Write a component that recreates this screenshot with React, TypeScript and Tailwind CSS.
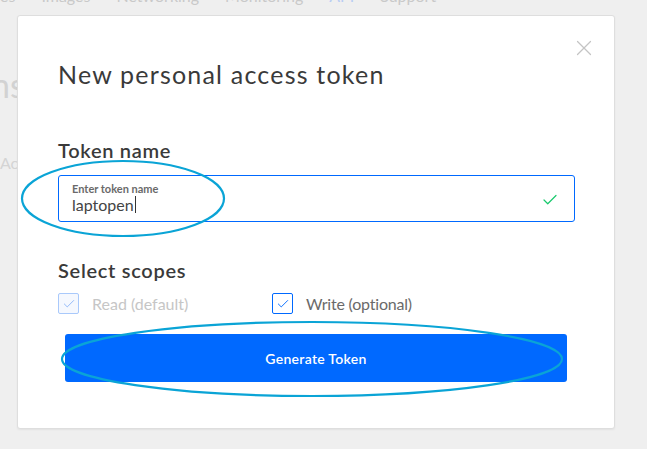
import { Check, X } from "lucide-react";

const font = { fontFamily: "Lato, 'Liberation Sans', sans-serif" };

function Scope({ label, checked, disabled }: { label: string; checked: boolean; disabled?: boolean }) {
    return (
        <div className="flex items-center gap-[13px] w-[214px] h-[21px]">
            <div
                className={
                    disabled
                        ? "w-[21px] h-[21px] rounded-[2px] border border-[#a9c9fb] bg-[#f5f8fe] flex items-center justify-center"
                        : "w-[21px] h-[21px] rounded-[2px] border border-[#0069ff] bg-white flex items-center justify-center"
                }
            >
                {checked && (
                    <Check
                        size={14}
                        strokeWidth={1.6}
                        className={disabled ? "text-[#8db6f7]" : "text-[#0069ff]"}
                    />
                )}
            </div>
            <div
                className={
                    disabled
                        ? "text-[16px] leading-[21px] text-[#c6c6c6]"
                        : "text-[16px] leading-[21px] tracking-[-0.2px] text-[#6a6a6a]"
                }
            >
                {label}
            </div>
        </div>
    );
}

export default function App() {
    return (
        <div className="relative w-[647px] h-[449px] overflow-hidden bg-[#efefef]" style={font}>
            {/* page behind the modal */}
            <div className="flex gap-[26px] -mt-[14px] h-[20px] leading-[20px] text-[16px] text-[#c9c9c9] whitespace-nowrap">
                <div>es</div>
                <div>Images</div>
                <div>Networking</div>
                <div>Monitoring</div>
                <div className="text-[#b9cdf3]">API</div>
                <div>Support</div>
            </div>
            <div className="mt-[58px] -ml-[9px] text-[34px] leading-[42px] text-[#d2d2d2] whitespace-nowrap">ns</div>
            <div className="mt-[47px] text-[16px] leading-[20px] text-[#d4d4d4]">Ac</div>

            {/* modal */}
            <div className="absolute left-[17px] top-[15px] w-[598px] h-[414px] bg-white border border-[#dedede] rounded-[3px] shadow-[0_1px_2px_rgba(0,0,0,0.06)] pl-[40px] pr-[39px] pt-[43px]">
                <button className="absolute right-[17px] top-[19px] text-[#c4c4c4]">
                    <X size={26} strokeWidth={1.1} />
                </button>

                <div className="text-[25px] leading-[30px] tracking-[1.2px] text-[#3a3a3a] whitespace-nowrap">
                    New personal access token
                </div>

                <div className="mt-[49px] text-[20px] leading-[24px] tracking-[0.7px] font-semibold text-[#3a3a3a]">
                    Token name
                </div>

                <div className="mt-[13px] h-[47px] border border-[#0069ff] rounded-[3px] pl-[13px] pr-[15px] pt-[6px] flex items-start justify-between">
                    <div className="flex flex-col">
                        <div className="text-[11px] leading-[13px] font-bold text-[#6a6a6a]">Enter token name</div>
                        <div className="flex items-center text-[16px] leading-[19px] text-[#444]">
                            laptopen
                            <span className="inline-block w-px h-[17px] bg-[#333] ml-px" />
                        </div>
                    </div>
                    <Check size={18} strokeWidth={1.6} className="text-[#18c96d] mt-[9px]" />
                </div>

                <div className="mt-[36px] text-[20px] leading-[24px] tracking-[0.7px] font-semibold text-[#3a3a3a]">
                    Select scopes
                </div>

                <div className="mt-[11px] flex">
                    <Scope label="Read (default)" checked disabled />
                    <Scope label="Write (optional)" checked />
                </div>

                <button className="mt-[20px] ml-[7px] w-[502px] h-[48px] rounded-[3px] bg-[#0069ff] text-white text-[14px] tracking-[0.3px] font-semibold">
                    Generate Token
                </button>
            </div>

            {/* hand-drawn annotation rings */}
            <svg className="absolute inset-0 pointer-events-none" width="647" height="449">
                <ellipse cx="123" cy="198.5" rx="101" ry="37.5" fill="none" stroke="#0aa4d6" strokeWidth="2.2" />
                <ellipse cx="312" cy="359" rx="250" ry="37" fill="none" stroke="#0aa4d6" strokeWidth="2.2" />
            </svg>
        </div>
    );
}
